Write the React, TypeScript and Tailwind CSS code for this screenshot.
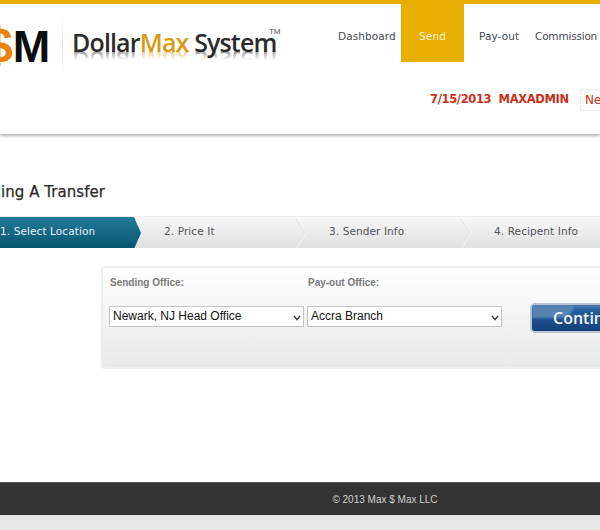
import React from "react";

const steps = [
  { label: "1. Select Location", width: "w-[141px]", pad: "pl-0", active: true },
  { label: "2. Price It", width: "w-[165px]", pad: "pl-[23px]" },
  { label: "3. Sender Info", width: "w-[165px]", pad: "pl-[23px]" },
  { label: "4. Recipent Info", width: "w-[165px]", pad: "pl-[23px]" }
];

const navFont = "font-['DejaVu_Sans',sans-serif] text-[10.5px] tracking-[0.1px]";

const Logo: React.FC = () => (
  <div className="flex h-[60px] shrink-0 items-start">
    <div className="w-[62px] shrink-0 overflow-hidden pt-[6px] whitespace-nowrap">
      <span className="-ml-[15px] inline-block font-['Liberation_Sans',sans-serif] text-[45px] leading-[48px] font-bold">
        <span className="text-[50px] text-[#e8830c]">$</span>
        <span className="text-[#0c0c0c]">M</span>
      </span>
    </div>
    <div className="h-[60px] w-px shrink-0 bg-gradient-to-b from-white via-[#e4e4e4] to-white" />
    <div className="relative ml-[9px] pt-[10px] font-['Open_Sans',sans-serif] text-[25px] leading-[34px] font-semibold tracking-[-0.85px] whitespace-nowrap">
      <div className="text-[#2b2b2b]">
        Dollar<span className="text-[#d99a12]">Max</span> System
      </div>
      <div
        aria-hidden="true"
        className="-mt-[8px] h-[9px] -scale-y-100 overflow-hidden leading-[18px] text-[#2b2b2b] opacity-50 [mask-image:linear-gradient(to_top,black,transparent)]"
      >
        <div className="-mt-[10px]">
          Dollar<span className="text-[#d99a12]">Max</span> System
        </div>
      </div>
      <span className="absolute top-[12px] right-[-4px] font-['Liberation_Sans',sans-serif] text-[8px] leading-[10px] font-normal tracking-normal text-[#555]">
        TM
      </span>
    </div>
  </div>
);

const Header: React.FC = () => (
  <header className="h-[130px] bg-white shadow-[0_2px_3px_rgba(0,0,0,0.3)]">
    <div className="flex h-[58px] items-start">
      <div className="w-[338px] shrink-0 pt-[11px]">
        <Logo />
      </div>
      <nav className={`flex shrink-0 items-start text-[#454a54] ${navFont}`}>
        <a className="flex h-[58px] w-[63px] items-center whitespace-nowrap pt-[8px]">Dashboard</a>
        <a className="flex h-[58px] w-[63px] items-center justify-center bg-[#e8ae00] pt-[8px] text-[#fdf6dd]">
          Send
        </a>
        <a className="ml-[15px] flex h-[58px] w-[56px] items-center whitespace-nowrap pt-[8px]">Pay-out</a>
        <a className="flex h-[58px] items-center whitespace-nowrap pt-[8px] tracking-[-0.2px]">Commission</a>
      </nav>
    </div>
    <div className="flex h-[72px] items-start pt-[29px] pl-[430px]">
      <div className="w-[150px] shrink-0 font-['DejaVu_Sans',sans-serif] text-[11.5px] leading-[16px] font-bold tracking-[-0.35px] whitespace-pre text-[#c8301a]">
        7/15/2013  MAXADMIN
      </div>
      <div className="-mt-[2px] h-[22px] w-[60px] shrink-0 border border-[#eeeeee] pl-[4px] font-['DejaVu_Sans',sans-serif] text-[12px] leading-[20px] text-[#c8301a]">
        New
      </div>
    </div>
  </header>
);

const Steps: React.FC = () => (
  <div className="flex h-[32px] w-[636px] border-t border-[#eeeeee] bg-gradient-to-b from-[#f8f8f8] to-[#dfe0e0]">
    {steps.map((s) => (
      <div
        key={s.label}
        className={`relative flex shrink-0 items-center pb-[1px] text-[10.5px] tracking-[0.1px] font-['DejaVu_Sans',sans-serif] ${s.width} ${s.pad} ${
          s.active ? "text-[#e6f2f6]" : "text-[#50545a]"
        }`}
      >
        {s.active ? (
          <>
            <div className="absolute inset-y-0 left-0 w-[134px] bg-gradient-to-b from-[#227a9b] to-[#07566f]" />
            <svg className="absolute top-0 left-[134px] h-[32px] w-[7px]" viewBox="0 0 7 32" preserveAspectRatio="none">
              <defs>
                <linearGradient id="stepTip" x1="0" y1="0" x2="0" y2="1">
                  <stop offset="0" stopColor="#227a9b" />
                  <stop offset="1" stopColor="#07566f" />
                </linearGradient>
              </defs>
              <path d="M0 0 L7 16 L0 32 Z" fill="url(#stepTip)" />
            </svg>
            <span className="relative">{s.label}</span>
          </>
        ) : (
          <>
            <span>{s.label}</span>
            <svg className="absolute top-0 right-0 h-[32px] w-[10px]" viewBox="0 0 10 32" preserveAspectRatio="none">
              <path d="M0 0 L10 16 L0 32" fill="none" stroke="#ffffff" strokeOpacity="0.7" strokeWidth="1" />
              <path d="M-1 0 L9 16 L-1 32" fill="none" stroke="#e2e3e3" strokeWidth="1" />
            </svg>
          </>
        )}
      </div>
    ))}
  </div>
);

const Field: React.FC<{ label: string; value: string; width: string }> = ({ label, value, width }) => (
  <div className={`flex shrink-0 flex-col ${width}`}>
    <label className="h-[28px] pt-[9px] pl-[1px] font-['Liberation_Sans',sans-serif] text-[10px] leading-[12px] font-bold text-[#7a7a7a]">
      {label}
    </label>
    <div className="relative mt-[10px] h-[21px] w-[195px]">
      <select
        defaultValue={value}
        className="block h-[21px] w-[195px] appearance-none border border-[#c4c4c4] bg-white pb-[5px] pl-[3px] font-['Liberation_Sans',sans-serif] text-[12px] text-[#111]"
      >
        <option>{value}</option>
      </select>
      <svg className="absolute top-[9px] right-[3px] h-[6px] w-[8px]" viewBox="0 0 8 6">
        <path d="M1 1 L4 4.5 L7 1" fill="none" stroke="#444" strokeWidth="1.5" />
      </svg>
    </div>
  </div>
);

const App: React.FC = () => {
  return (
    <div className="flex h-[530px] w-[600px] flex-col overflow-hidden bg-white">
      <div className="h-[4px] shrink-0 bg-[#e8ae00]" />
      <Header />
      <main className="h-[348px] shrink-0">
        <h1 className="-ml-[37px] pt-[48px] font-['DejaVu_Sans',sans-serif] text-[15px] leading-[20px] font-normal tracking-[0.05px] whitespace-nowrap text-[#2a2a2a] [-webkit-text-stroke:0.25px_#2a2a2a]">
          Sending A Transfer
        </h1>
        <div className="mt-[14px]">
          <div className="w-[600px] overflow-hidden">
            <Steps />
          </div>
        </div>
        <div className="mt-[18px] ml-[101px] flex h-[103px] w-[560px] rounded-[4px] border-2 border-[#eeeeee] bg-gradient-to-b from-white to-[#e8e9e9] pl-[6px]">
          <Field label="Sending Office:" value="Newark, NJ Head Office" width="w-[198px]" />
          <Field label="Pay-out Office:" value="Accra Branch" width="w-[223px]" />
          <button className="relative mt-[35px] h-[30px] w-[120px] shrink-0 overflow-hidden rounded-[5px] border-2 border-[#b9c3cf] bg-gradient-to-b from-[#2a66a3] to-[#123f7c] pl-[21px] text-left font-['Open_Sans',sans-serif] text-[16px] leading-[24px] font-semibold text-[#f2f6fa]">
            <span className="absolute top-0 left-0 h-[3px] w-full bg-[#4a7cb0] blur-[1px]" />
            <span className="absolute top-0 left-0 h-[13px] w-[42px] rounded-br-[30px] bg-[#5684b3] blur-[1px]" />
            <span className="relative">Continue</span>
          </button>
        </div>
      </main>
      <footer className="flex h-[33px] shrink-0 items-center justify-center border-t border-[#555555] bg-[#333333] pl-[170px] font-['Liberation_Sans',sans-serif] text-[10px] text-[#cfcfcf]">
        © 2013 Max $ Max LLC
      </footer>
      <div className="flex-1 bg-[#e7e7e7]" />
    </div>
  );
};

export default App;
